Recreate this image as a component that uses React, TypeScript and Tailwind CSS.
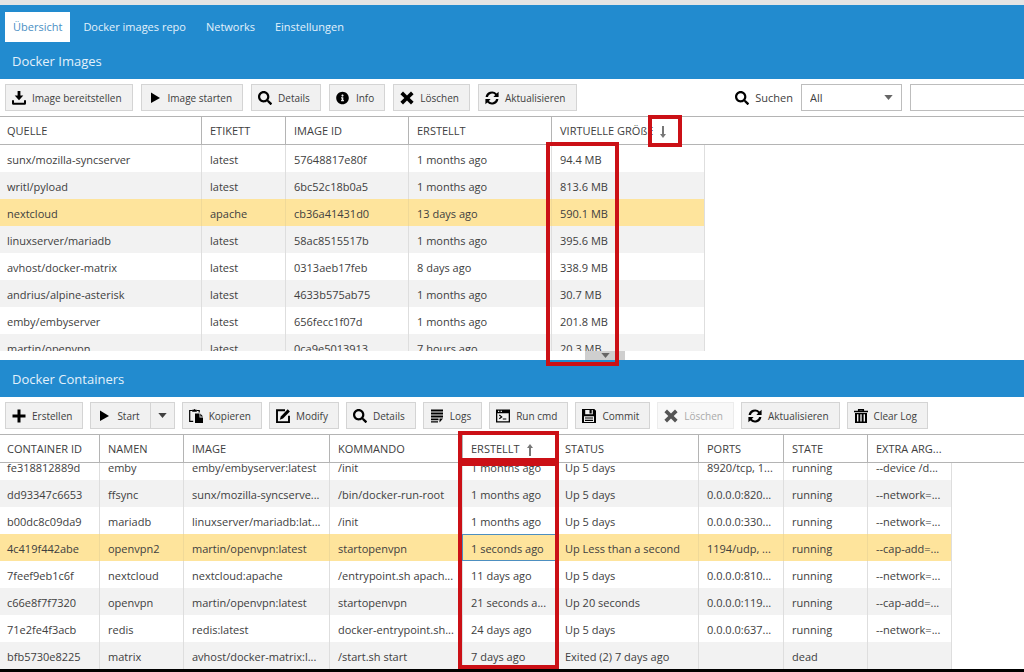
import React, { useLayoutEffect, useRef } from 'react';
import { FaInfoCircle, FaSearch } from 'react-icons/fa';

interface IconProps {
  children: React.ReactNode;
}

const Icon: React.FC<IconProps> = ({ children }) => (
  <svg viewBox="0 0 14 14" className="w-[14px] h-[14px] shrink-0" fill="currentColor" aria-hidden="true">
    {children}
  </svg>
);

const DownloadIcon = () => (
  <Icon>
    <path d="M5.6 0h2.8v4.6h2.9L7 9.2 2.7 4.6h2.9z" />
    <path d="M0 9.2h2v2.6h10V9.2h2v3.2q0 1.4-1.4 1.4H1.4Q0 13.8 0 12.4z" />
  </Icon>
);

const PlayIcon = () => (
  <Icon>
    <path d="M3 1.5 12 7 3 12z" />
  </Icon>
);

const SearchIcon = () => <FaSearch className="w-[14px] h-[14px] shrink-0" />;

const InfoIcon = () => <FaInfoCircle className="w-[13px] h-[14px] mr-px shrink-0" />;

const TimesIcon = () => (
  <Icon>
    <path d="M3 .6 7 4.5 11 .6 13.6 3.2 9.7 7l3.9 3.8L11 13.4 7 9.5 3 13.4.4 10.8 4.3 7 .4 3.2z" />
  </Icon>
);

const RefreshIcon = () => (
  <Icon>
    <path d="M.6 6A6.4 6.1 0 0 1 11.7 2.5L13.6.7V5.9H8.4L10.2 4A4.2 4.2 0 0 0 2.9 6z" />
    <path d="M13.4 8A6.4 6.1 0 0 1 2.3 11.5L.4 13.3V8.1H5.6L3.8 10A4.2 4.2 0 0 0 11.1 8z" />
  </Icon>
);

const PlusIcon = () => (
  <Icon>
    <path d="M5.5.5h3v5h5v3h-5v5h-3v-5h-5v-3h5z" />
  </Icon>
);

const CopyIcon = () => (
  <Icon>
    <path d="M3.5 1.500H.7v10.800h3.500M7.800 1.500h2.400v2" fill="none" stroke="currentColor" strokeWidth="1.2" />
    <path d="M3.200 .8h1.300Q5.500-.7 6.500 .8h1.300v2H3.200z" />
    <path d="M6 4.500h4.500v4H14V14H6z" />
    <path d="M11.300 4.500 14 7.500h-2.700z" />
  </Icon>
);

const ModifyIcon = () => (
  <Icon>
    <path d="M9 1.2H1v11.9h12V6.8" fill="none" stroke="currentColor" strokeWidth="1.9" />
    <path d="M11.7.3 13.9 2.4 7 9.6 3.8 10.7 4.8 7.5z" />
  </Icon>
);

const LogsIcon = () => (
  <Icon>
    <path d="M1 .5h12v2H1zM1 3.500h12v2H1zM1 6.500h12v2H1zM1 9.500h7.500v1.800H1zM1 12.200h7v1.400H1zM9.500 9.500H13L9.500 13.600z" />
  </Icon>
);

const ConsoleIcon = () => (
  <Icon>
    <path fillRule="evenodd" d="M0 .5h14v13H0zM1.3 4.3v7.9h11.4V4.3zM2 1.8v1.1h1.3V1.8zM4.6 1.8v1.1h1.3V1.8z" />
    <path d="M3.3 6 5.7 7.9 3.3 9.8M6.8 10h3.5" fill="none" stroke="currentColor" strokeWidth="1.2" />
  </Icon>
);

const SaveIcon = () => (
  <Icon>
    <path fillRule="evenodd" d="M0 0h12.3L14 1.7V14H0zM3.2 1v4.3h7.6V1zM2 7.2V13h10V7.2z" />
    <path d="M7.5 1h2.2v3.4H7.5zM3 8.4h8v1.2H3zM3 10.7h8v1.2H3z" />
  </Icon>
);

const TrashIcon = () => (
  <Icon>
    <path d="M4.7 2V.7h4.6V2M0 2.6h14" fill="none" stroke="currentColor" strokeWidth="1.5" />
    <path fillRule="evenodd" d="M1 4h12v10H1zM3 5.3v7.2h1.4V5.3zM6.3 5.3v7.2h1.4V5.3zM9.6 5.3v7.2H11V5.3z" />
  </Icon>
);

const Caret = () => (
  <svg viewBox="0 0 10 6" className="w-[9px] h-[5px]" fill="currentColor" aria-hidden="true">
    <path d="M0 0h10L5 6z" />
  </svg>
);

const SortArrow: React.FC<{ up?: boolean }> = ({ up }) => (
  <svg viewBox="0 0 6 12" className="w-[6px] h-[12px]" fill="#777" aria-hidden="true">
    {up ? <path d="M3 0 6 4H4v8H2V4H0z" /> : <path d="M3 12 0 8h2V0h2v8h2z" />}
  </svg>
);

interface ToolButtonProps {
  icon: React.ReactNode;
  label: string;
  disabled?: boolean;
}

const ToolButton: React.FC<ToolButtonProps> = ({ icon, label, disabled }) => (
  <button
    type="button"
    disabled={disabled}
    className="h-[27px] shrink-0 flex items-center gap-[6px] pl-[6px] pr-[10px] border border-[#d4d4d4] bg-[#f1f1f1] text-[10px] text-black whitespace-nowrap disabled:bg-[#f8f8f8] disabled:border-[#ececec] disabled:text-[#555]"
  >
    {icon}
    <span className={disabled ? 'pt-[2px] text-[#aaa]' : 'pt-[2px] text-[#404040]'}>{label}</span>
  </button>
);

interface Column {
  title: string;
  width: string;
  sort?: 'up' | 'down';
}

interface GridProps {
  label: string;
  columns: Column[];
  rows: string[][];
  selected: number;
  focusedCell?: number;
  scrollTop?: number;
}

const Grid: React.FC<GridProps> = ({ label, columns, rows, selected, focusedCell, scrollTop = 0 }) => {
  const pane = useRef<HTMLDivElement>(null);

  useLayoutEffect(() => {
    if (pane.current) pane.current.scrollTop = scrollTop;
  }, [scrollTop]);

  const cellColor = (i: number) => {
    if (i === selected) return 'bg-[#fee49c] border-[#f0d998]';
    return i % 2 ? 'bg-[#f2f2f2] border-[#dedede]' : 'bg-white border-[#dedede]';
  };

  return (
    <div ref={pane} className="h-[235px] overflow-hidden">
      <table aria-label={label} className="w-full table-fixed border-separate border-spacing-0 text-[11px] text-[#404040]">
        <colgroup>
          {columns.map(c => <col key={c.title} className={c.width} />)}
          <col />
        </colgroup>
        <thead>
          <tr>
            {columns.map(c => (
              <th
                key={c.title}
                scope="col"
                className="sticky top-0 h-[29px] p-0 pt-[2px] pl-[8px] first:pl-[7px] bg-white border-y border-l first:border-l-0 border-[#b4b4b4] text-left font-normal whitespace-nowrap"
              >
                <span className="flex items-center gap-[7px]">
                  {c.title}
                  {c.sort && <SortArrow up={c.sort === 'up'} />}
                </span>
              </th>
            ))}
            <td className="sticky top-0 h-[29px] p-0 bg-white border-y border-[#b4b4b4]"></td>
          </tr>
        </thead>
        <tbody>
          {rows.map((row, i) => (
            <tr key={row[0]}>
              {row.map((value, j) => (
                <td
                  key={j}
                  className={`h-[27px] p-0 pt-[3px] pl-[8px] first:pl-[7px] border-l first:border-l-0 overflow-hidden whitespace-nowrap ${cellColor(i)} ${
                    i === selected && j === focusedCell ? 'outline outline-1 -outline-offset-1 outline-[#4d8fc0]' : ''
                  }`}
                >
                  {value}
                </td>
              ))}
              <td className="h-[27px] p-0 border-l border-[#dedede]"></td>
            </tr>
          ))}
        </tbody>
      </table>
    </div>
  );
};

const imageColumns: Column[] = [
  { title: 'QUELLE', width: 'w-[201px]' },
  { title: 'ETIKETT', width: 'w-[84px]' },
  { title: 'IMAGE ID', width: 'w-[123px]' },
  { title: 'ERSTELLT', width: 'w-[143px]' },
  { title: 'VIRTUELLE GRÖßE', width: 'w-[153px]', sort: 'down' },
];

const images = [
  ['sunx/mozilla-syncserver', 'latest', '57648817e80f', '1 months ago', '94.4 MB'],
  ['writl/pyload', 'latest', '6bc52c18b0a5', '1 months ago', '813.6 MB'],
  ['nextcloud', 'apache', 'cb36a41431d0', '13 days ago', '590.1 MB'],
  ['linuxserver/mariadb', 'latest', '58ac8515517b', '1 months ago', '395.6 MB'],
  ['avhost/docker-matrix', 'latest', '0313aeb17feb', '8 days ago', '338.9 MB'],
  ['andrius/alpine-asterisk', 'latest', '4633b575ab75', '1 months ago', '30.7 MB'],
  ['emby/embyserver', 'latest', '656fecc1f07d', '1 months ago', '201.8 MB'],
  ['martin/openvpn', 'latest', '0ca9e5013913', '7 hours ago', '20.3 MB'],
];

const containerColumns: Column[] = [
  { title: 'CONTAINER ID', width: 'w-[99px]' },
  { title: 'NAMEN', width: 'w-[84px]' },
  { title: 'IMAGE', width: 'w-[146px]' },
  { title: 'KOMMANDO', width: 'w-[133px]' },
  { title: 'ERSTELLT', width: 'w-[94px]', sort: 'up' },
  { title: 'STATUS', width: 'w-[142px]' },
  { title: 'PORTS', width: 'w-[85px]' },
  { title: 'STATE', width: 'w-[84px]' },
  { title: 'EXTRA ARG...', width: 'w-[84px]' },
];

const containers = [
  ['fe318812889d', 'emby', 'emby/embyserver:latest', '/init', '1 months ago', 'Up 5 days', '8920/tcp, 1...', 'running', '--device /d...'],
  ['dd93347c6653', 'ffsync', 'sunx/mozilla-syncserve...', '/bin/docker-run-root', '1 months ago', 'Up 5 days', '0.0.0.0:820...', 'running', '--network=...'],
  ['b00dc8c09da9', 'mariadb', 'linuxserver/mariadb:lat...', '/init', '1 months ago', 'Up 5 days', '0.0.0.0:330...', 'running', '--network=...'],
  ['4c419f442abe', 'openvpn2', 'martin/openvpn:latest', 'startopenvpn', '1 seconds ago', 'Up Less than a second', '1194/udp, ...', 'running', '--cap-add=...'],
  ['7feef9eb1c6f', 'nextcloud', 'nextcloud:apache', '/entrypoint.sh apach...', '11 days ago', 'Up 5 days', '0.0.0.0:810...', 'running', '--network=...'],
  ['c66e8f7f7320', 'openvpn', 'martin/openvpn:latest', 'startopenvpn', '21 seconds a...', 'Up 20 seconds', '0.0.0.0:119...', 'running', '--cap-add=...'],
  ['71e2fe4f3acb', 'redis', 'redis:latest', 'docker-entrypoint.sh...', '24 days ago', 'Up 5 days', '0.0.0.0:637...', 'running', '--network=...'],
  ['bfb5730e8225', 'matrix', 'avhost/docker-matrix:l...', '/start.sh start', '7 days ago', 'Exited (2) 7 days ago', '', 'dead', ''],
];

const tabs = ['Übersicht', 'Docker images repo', 'Networks', 'Einstellungen'];

const App: React.FC = () => {
  return (
    <div className="relative min-h-screen overflow-hidden bg-white font-['Open_Sans',sans-serif]">
      <div className="h-[5px] bg-[#e4e4e4]"></div>

      <header className="bg-[#228bcf] text-[#e2f1fb] pt-[7px]">
        <nav className="flex pl-[5px]">
          {tabs.map((tab, i) => (
            <a
              key={tab}
              href="#"
              className={`h-[30px] flex items-center text-[11px] ${i === 0 ? 'bg-white text-[#4a8fc4] px-[8px] mr-[3px]' : 'px-[10px]'}`}
            >
              {tab}
            </a>
          ))}
        </nav>
        <h1 className="h-[37px] flex items-center pt-[2px] pl-3 text-[13px]">Docker Images</h1>
      </header>

      <div className="h-[37px] flex items-center gap-[8px] pl-[5px]">
        <ToolButton icon={<DownloadIcon />} label="Image bereitstellen" />
        <ToolButton icon={<PlayIcon />} label="Image starten" />
        <ToolButton icon={<SearchIcon />} label="Details" />
        <ToolButton icon={<InfoIcon />} label="Info" />
        <ToolButton icon={<TimesIcon />} label="Löschen" />
        <ToolButton icon={<RefreshIcon />} label="Aktualisieren" />
        <label htmlFor="search-field" className="ml-auto flex items-center gap-[6px] text-[11px] text-[#404040]">
          <span className="text-black"><SearchIcon /></span>
          <span className="pt-[2px]">Suchen</span>
        </label>
        <div className="relative w-[101px] text-[#666]">
          <select
            id="search-field"
            className="w-full h-[27px] appearance-none border border-[#bdbdbd] bg-white pt-[2px] pl-2 text-[11px] text-[#404040]"
          >
            <option>All</option>
          </select>
          <span className="absolute right-[9px] top-[11px] pointer-events-none"><Caret /></span>
        </div>
        <input type="text" aria-label="Suchen" className="w-[114px] h-[27px] border border-r-0 border-[#bdbdbd] px-2 text-[11px]" />
      </div>

      <Grid label="Docker Images" columns={imageColumns} rows={images} selected={2} />

      <div className="h-[9px] flex">
        <button
          type="button"
          aria-label="Einklappen"
          className="ml-[585px] w-[40px] flex items-center justify-center bg-[#cfcfcf] text-[#666]"
        >
          <Caret />
        </button>
      </div>

      <h1 className="h-[37px] flex items-center pt-[2px] pl-3 bg-[#228bcf] text-[#e2f1fb] text-[13px]">Docker Containers</h1>

      <div className="h-[37px] flex items-center gap-[7px] pl-[5px]">
        <ToolButton icon={<PlusIcon />} label="Erstellen" />
        <div className="flex">
          <ToolButton icon={<PlayIcon />} label="Start" />
          <button
            type="button"
            aria-label="Start Optionen"
            className="w-[24px] h-[27px] flex items-center justify-center border border-l-0 border-[#d4d4d4] bg-[#f1f1f1] text-[#404040]"
          >
            <Caret />
          </button>
        </div>
        <ToolButton icon={<CopyIcon />} label="Kopieren" />
        <ToolButton icon={<ModifyIcon />} label="Modify" />
        <ToolButton icon={<SearchIcon />} label="Details" />
        <ToolButton icon={<LogsIcon />} label="Logs" />
        <ToolButton icon={<ConsoleIcon />} label="Run cmd" />
        <ToolButton icon={<SaveIcon />} label="Commit" />
        <ToolButton icon={<TimesIcon />} label="Löschen" disabled />
        <ToolButton icon={<RefreshIcon />} label="Aktualisieren" />
        <ToolButton icon={<TrashIcon />} label="Clear Log" />
      </div>

      <Grid
        label="Docker Containers"
        columns={containerColumns}
        rows={containers}
        selected={3}
        focusedCell={4}
        scrollTop={10}
      />

      <div className="h-[3px] bg-black"></div>

      {/* red markers around the sorted columns */}
      <div className="absolute pointer-events-none left-[648px] top-[115px] w-[34px] h-[32px] border-4 border-[#cb1016]"></div>
      <div className="absolute pointer-events-none left-[546px] top-[142px] w-[73px] h-[224px] border-4 border-[#cb1016]"></div>
      <div className="absolute pointer-events-none left-[458px] top-[431px] w-[101px] h-[31px] border-4 border-[#cb1016]"></div>
      <div className="absolute pointer-events-none left-[458px] top-[462px] w-[101px] h-[207px] border-4 border-[#cb1016]"></div>
    </div>
  );
};

export default App;
